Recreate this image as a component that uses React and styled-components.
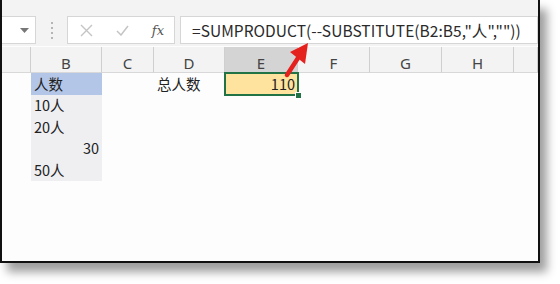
import React from "react";
import styled, { createGlobalStyle } from "styled-components";

const Global = createGlobalStyle`
  html, body { margin: 0; padding: 0; background: #fff; }
  body { width: 560px; height: 284px; overflow: hidden; font-family: "Noto Sans CJK SC", "Noto Sans", sans-serif; }
`;

const Page = styled.div`
  position: relative;
  width: 560px;
  height: 284px;
`;

const Frame = styled.div`
  position: relative;
  width: 536px;
  height: 261px;
  border-left: 2px solid #111;
  border-right: 2px solid #111;
  border-bottom: 2px solid #111;
  background: #fdfdfd;
  box-shadow: 7px 9px 9px rgba(0, 0, 0, 0.38);
  overflow: hidden;
`;

const Toolbar = styled.div`
  display: flex;
  align-items: flex-start;
  height: 46px;
  padding-top: 16px;
  box-sizing: border-box;
  background: #f3f3f3;
`;

const Box = styled.div`
  height: 28px;
  box-sizing: border-box;
  background: #fff;
  border: 1px solid #d6d6d6;
  display: flex;
  align-items: center;
`;

const NameBox = styled(Box)`
  width: 35px;
  margin-left: -1px;
  justify-content: flex-end;
  padding-right: 6px;
`;

const Dots = styled.div`
  width: 31px;
  height: 28px;
  display: flex;
  flex-direction: column;
  align-items: center;
  justify-content: center;
  gap: 3px;
  span {
    width: 2px;
    height: 2px;
    background: #b5b5b5;
  }
`;

const IconBox = styled(Box)`
  width: 108px;
  padding: 0 10px 0 12px;
  justify-content: space-between;
  margin-right: 5px;
`;

const Fx = styled.span`
  font-family: "DejaVu Serif", "Liberation Serif", serif;
  font-style: italic;
  font-size: 13px;
  color: #555;
`;

const FormulaBox = styled(Box)`
  flex: 1;
  padding-left: 11px;
  font-size: 15.5px;
  letter-spacing: 0.05px;
  color: #2a2a2a;
  white-space: nowrap;
  overflow: hidden;
`;

const Sheet = styled.div`
  display: grid;
  grid-template-columns: 29px 71px 52px 71px 73px 72px 72px 72px 1fr;
  grid-template-rows: 26px repeat(5, 21.6px);
  padding-top: 1px;
`;

const Head = styled.div`
  background: ${p => (p.$active ? "#d4d4d4" : "#f3f3f3")};
  border-right: 1px solid #cfcfcf;
  border-bottom: 1px solid #d8d8d8;
  display: flex;
  align-items: flex-end;
  justify-content: center;
  padding-bottom: 1px;
  font-family: "Noto Sans", sans-serif;
  font-size: 15px;
  color: #444;
  line-height: 1;
  box-sizing: border-box;
`;

const Cell = styled.div`
  position: relative;
  background: ${p => p.$bg || "transparent"};
  display: flex;
  align-items: center;
  justify-content: ${p => (p.$right ? "flex-end" : "flex-start")};
  padding: 0 3px;
  font-size: 14.5px;
  line-height: 1;
  color: #222;
  box-sizing: border-box;
  white-space: nowrap;
`;

const Selected = styled(Cell)`
  outline: 2px solid #217346;
  outline-offset: -1px;
  &::after {
    content: "";
    position: absolute;
    right: -4px;
    bottom: -4px;
    width: 5px;
    height: 5px;
    background: #217346;
    border: 1px solid #fff;
  }
`;

const Arrow = styled.svg`
  position: absolute;
  left: 278px;
  top: 40px;
`;

const cols = ["", "B", "C", "D", "E", "F", "G", "H", ""];
const bCells = [
  { text: "人数", bg: "#b4c6e7" },
  { text: "10人" },
  { text: "20人" },
  { text: "30", right: true },
  { text: "50人" },
];

export default function App() {
  return (
    <Page>
      <Global />
      <Frame>
        <Toolbar>
          <NameBox>
            <svg width="9" height="5" viewBox="0 0 9 5">
              <path d="M0 0h9L4.5 5z" fill="#777" />
            </svg>
          </NameBox>
          <Dots>
            <span />
            <span />
            <span />
            <span />
          </Dots>
          <IconBox>
            <svg width="13" height="13" viewBox="0 0 13 13">
              <path d="M1 1l11 11M12 1L1 12" stroke="#c4c4c4" strokeWidth="1.4" fill="none" />
            </svg>
            <svg width="13" height="11" viewBox="0 0 13 11">
              <path d="M1 6l4 4 7-9" stroke="#c4c4c4" strokeWidth="1.5" fill="none" />
            </svg>
            <Fx>fx</Fx>
          </IconBox>
          <FormulaBox>=SUMPRODUCT(--SUBSTITUTE(B2:B5,"人",""))</FormulaBox>
        </Toolbar>
        <Sheet>
          {cols.map((c, i) => (
            <Head key={"h" + i} $active={c === "E"}>
              {c}
            </Head>
          ))}
          {bCells.map((b, r) => (
            <React.Fragment key={"r" + r}>
              <Cell />
              <Cell $bg={b.bg || "#efeff2"} $right={b.right}>
                {b.text}
              </Cell>
              <Cell />
              <Cell>{r === 0 ? "总人数" : ""}</Cell>
              {r === 0 ? (
                <Selected $bg="#fde39d" $right>
                  110
                </Selected>
              ) : (
                <Cell />
              )}
              <Cell />
              <Cell />
              <Cell />
              <Cell />
            </React.Fragment>
          ))}
        </Sheet>
      </Frame>
      <Arrow width="40" height="42" viewBox="0 0 40 42">
        <path d="M9 35L20 18" stroke="#e5211d" strokeWidth="4.5" strokeLinecap="round" />
        <path d="M30 3L12 12L27 24Z" fill="#e5211d" />
      </Arrow>
    </Page>
  );
}
